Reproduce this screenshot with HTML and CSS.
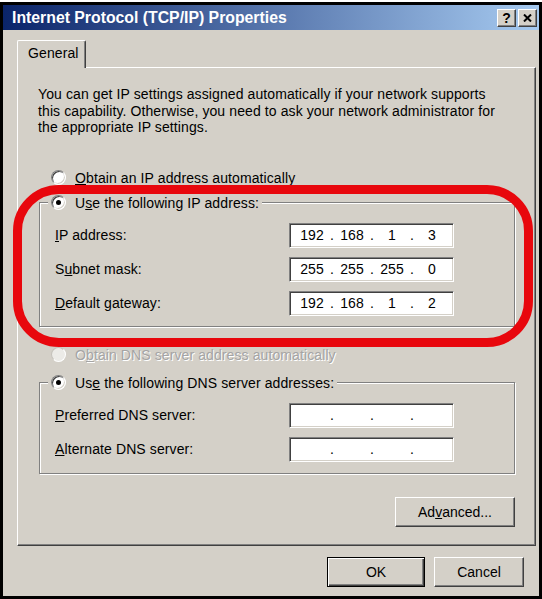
FILE: index.html
```html
<!DOCTYPE html>
<html lang="en">
<head>
    <meta charset="UTF-8">
    <title>Internet Protocol (TCP/IP) Properties</title>
    <link rel="stylesheet" href="styles.css">
</head>
<body>
<div class="dialog">
    <div class="titlebar">
        <span class="title">Internet Protocol (TCP/IP) Properties</span>
        <div class="title-btns">
            <span class="tbtn">?</span>
            <span class="tbtn"><svg width="9" height="8" viewBox="0 0 9 8"><path d="M1 0.5 L8 7.5 M8 0.5 L1 7.5" stroke="#000" stroke-width="2"/></svg></span>
        </div>
    </div>
    <div class="client">
        <div class="tab">General</div>
        <div class="panel">
            <p class="intro">You can get IP settings assigned automatically if your network supports<br>this capability. Otherwise, you need to ask your network administrator for<br>the appropriate IP settings.</p>

            <div class="radio-row auto-ip"><span class="radio"></span><span><u>O</u>btain an IP address automatically</span></div>

            <fieldset class="group ip-group">
                <legend><span class="legend-inner"><span class="radio on"></span><span>U<u>s</u>e the following IP address:</span></span></legend>
                <div class="field">
                    <label><u>I</u>P address:</label>
                    <div class="ipbox"><span class="oct">192</span><span class="dot">.</span><span class="oct">168</span><span class="dot">.</span><span class="oct">1</span><span class="dot">.</span><span class="oct">3</span></div>
                </div>
                <div class="field">
                    <label>S<u>u</u>bnet mask:</label>
                    <div class="ipbox"><span class="oct">255</span><span class="dot">.</span><span class="oct">255</span><span class="dot">.</span><span class="oct">255</span><span class="dot">.</span><span class="oct">0</span></div>
                </div>
                <div class="field">
                    <label><u>D</u>efault gateway:</label>
                    <div class="ipbox"><span class="oct">192</span><span class="dot">.</span><span class="oct">168</span><span class="dot">.</span><span class="oct">1</span><span class="dot">.</span><span class="oct">2</span></div>
                </div>
            </fieldset>

            <div class="radio-row disabled"><span class="radio off"></span><span>O<u>b</u>tain DNS server address automatically</span></div>

            <fieldset class="group dns-group">
                <legend><span class="legend-inner"><span class="radio on"></span><span>Us<u>e</u> the following DNS server addresses:</span></span></legend>
                <div class="field">
                    <label><u>P</u>referred DNS server:</label>
                    <div class="ipbox"><span class="oct"></span><span class="dot">.</span><span class="oct"></span><span class="dot">.</span><span class="oct"></span><span class="dot">.</span><span class="oct"></span></div>
                </div>
                <div class="field">
                    <label><u>A</u>lternate DNS server:</label>
                    <div class="ipbox"><span class="oct"></span><span class="dot">.</span><span class="oct"></span><span class="dot">.</span><span class="oct"></span><span class="dot">.</span><span class="oct"></span></div>
                </div>
            </fieldset>

            <div class="adv-row"><button class="btn adv">Ad<u>v</u>anced...</button></div>
        </div>
        <div class="footer">
            <button class="btn ok">OK</button>
            <button class="btn cancel">Cancel</button>
        </div>
    </div>
    <!-- red marker drawn over the static IP block -->
    <div class="callout"></div>
</div>
</body>
</html>
```

FILE: styles.css
```css
*{
    box-sizing: border-box;
}
body{
    margin: 0;
    background: #fff;
    font-family: "Liberation Sans", Arial, sans-serif;
    font-size: 14px;
    letter-spacing: 0.1px;
    color: #000;
}
.dialog{
    position: relative;
    width: 542px;
    height: 597px;
    margin-top: 2px;
    border: 3px solid #000;
    background: #d4d0c8;
}
.titlebar{
    height: 25px;
    display: flex;
    align-items: center;
    justify-content: space-between;
    padding: 0 2px 0 9px;
    background: linear-gradient(to right, #0a246a, #a6caf0);
}
.title{
    color: #fff;
    font-weight: bold;
    font-size: 15.8px;
    letter-spacing: 0;
}
.title-btns{
    display: flex;
    gap: 2px;
}
.tbtn{
    width: 19px;
    height: 18px;
    display: flex;
    align-items: center;
    justify-content: center;
    background: #d4d0c8;
    border: 1px solid;
    border-color: #fff #404040 #404040 #fff;
    box-shadow: inset -1px -1px #808080;
    font-weight: bold;
    font-size: 14px;
}
.client{
    padding: 10px 0 0 14px;
}
.tab{
    position: relative;
    z-index: 1;
    width: 69px;
    height: 28px;
    margin-bottom: -1px;
    padding: 3px 0 0 10px;
    line-height: 18px;
    background: #d4d0c8;
    border-top: 1px solid #fff;
    border-left: 1px solid #fff;
    border-right: 1px solid #404040;
    border-radius: 2px 2px 0 0;
    box-shadow: inset -1px 0 #808080;
}
.panel{
    width: 519px;
    height: 479px;
    border: 1px solid;
    border-color: #fff #404040 #404040 #fff;
    box-shadow: inset -1px -1px #808080;
}
.intro{
    margin: 18px 0 0 20px;
    line-height: 16.5px;
}
.radio-row{
    display: flex;
    align-items: center;
    height: 18px;
    margin-left: 33px;
}
.auto-ip{
    margin-top: 33px;
}
.radio{
    position: relative;
    flex: none;
    width: 15px;
    height: 15px;
    margin-right: 9px;
    border-radius: 50%;
    border: 1px solid;
    border-color: #808080 #fff #fff #808080;
    box-shadow: inset 1px 1px #404040, inset -1px -1px #d4d0c8;
    background: #fff;
}
.radio.on::after{
    content: "";
    position: absolute;
    left: 4px;
    top: 4px;
    width: 5px;
    height: 5px;
    border-radius: 50%;
    background: #000;
}
.radio.off{
    background: #ecebe7;
    border-color: #c4c1ba #fff #fff #c4c1ba;
    box-shadow: none;
}
.disabled{
    margin-top: 19px;
    color: #a4a4a4;
    text-shadow: 1px 1px 0 #fff;
}
.group{
    width: 476px;
    min-width: 0;
    margin: 0 0 0 21px;
    padding: 11px 0 10px 8px;
    border: 1px solid #808080;
    box-shadow: inset 1px 1px #fff, 1px 1px #fff;
}
.ip-group{
    margin-top: 7px;
}
.dns-group{
    margin-top: 10px;
    padding-bottom: 11px;
}
legend{
    padding: 0 3px;
    background: #d4d0c8;
}
.legend-inner{
    display: flex;
    align-items: center;
    height: 18px;
}
.field{
    display: flex;
    align-items: center;
    height: 25px;
    margin-left: 7px;
}
.field + .field{
    margin-top: 9px;
}
.field label{
    width: 234px;
}
.ipbox{
    display: flex;
    align-items: center;
    width: 165px;
    height: 25px;
    padding-left: 4px;
    background: #fff;
    border: 1px solid;
    border-color: #808080 #fff #fff #808080;
    box-shadow: inset 1px 1px #404040, inset -1px -1px #d4d0c8;
}
.oct{
    width: 36px;
    text-align: center;
}
.dot{
    width: 4px;
    text-align: center;
}
.btn{
    height: 30px;
    padding: 0;
    font: inherit;
    color: #000;
    background: #d4d0c8;
    border: 1px solid;
    border-color: #fff #404040 #404040 #fff;
    box-shadow: inset -1px -1px #808080;
}
.adv-row{
    display: flex;
    justify-content: flex-end;
    margin: 23px 20px 0 0;
}
.adv{
    width: 120px;
}
.footer{
    display: flex;
    justify-content: flex-end;
    gap: 9px;
    margin-top: 11px;
    padding-right: 15px;
}
.ok{
    width: 98px;
    border-color: #000;
    box-shadow: inset 1px 1px #fff, inset -1px -1px #404040, inset -2px -2px #808080;
}
.cancel{
    width: 90px;
}
.callout{
    position: absolute;
    left: 10px;
    top: 180px;
    width: 520px;
    height: 162px;
    border: 9px solid #e8070d;
    border-radius: 46px;
    pointer-events: none;
}
```
